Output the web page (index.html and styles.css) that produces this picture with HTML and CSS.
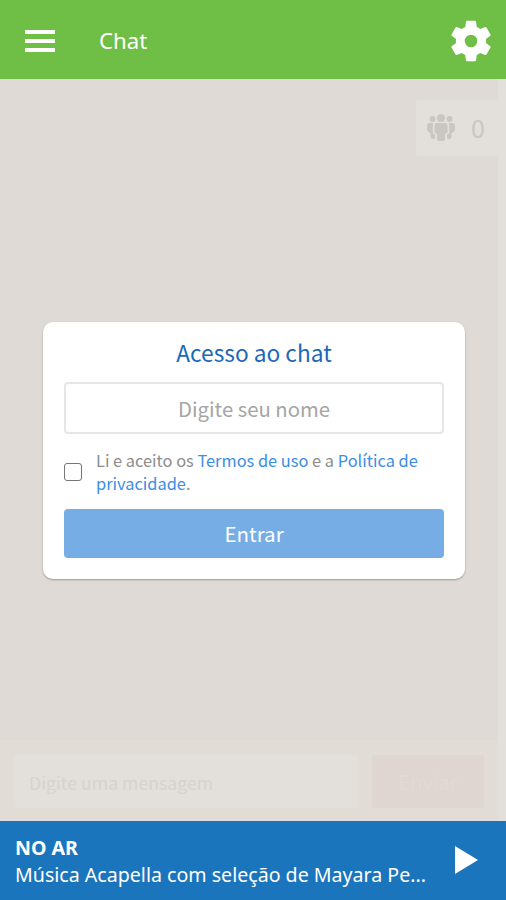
FILE: index.html
```html
<!DOCTYPE html>
<html lang="pt-BR">
<head>
  <meta charset="UTF-8">
  <meta name="viewport" content="width=device-width, initial-scale=1.0">
  <title>Chat</title>
  <link rel="stylesheet" href="styles.css">
</head>
<body>
  <!-- Top bar -->
  <header class="topbar">
    <button class="menu-btn" aria-label="Menu">
      <span></span>
      <span></span>
      <span></span>
    </button>
    <h1>Chat</h1>
    <button class="settings-btn" aria-label="Ajustes">
      <svg viewBox="2 2 20 20" width="42" height="42">
        <path fill="#fff" d="M19.14 12.94c.04-.3.06-.61.06-.94s-.02-.64-.07-.94l2.03-1.58a.49.49 0 0 0 .12-.61l-1.92-3.32a.49.49 0 0 0-.59-.22l-2.39.96a7 7 0 0 0-1.62-.94l-.36-2.54a.48.48 0 0 0-.48-.41h-3.84a.48.48 0 0 0-.47.41l-.36 2.54c-.59.24-1.13.57-1.62.94l-2.39-.96a.48.48 0 0 0-.59.22L2.74 8.87a.48.48 0 0 0 .12.61l2.03 1.58c-.05.3-.09.63-.09.94s.02.64.07.94l-2.03 1.58a.49.49 0 0 0-.12.61l1.92 3.32c.12.22.37.29.59.22l2.39-.96c.5.38 1.03.7 1.62.94l.36 2.54c.05.24.24.41.48.41h3.84c.24 0 .44-.17.47-.41l.36-2.54a7 7 0 0 0 1.62-.94l2.39.96c.22.08.47 0 .59-.22l1.92-3.32a.48.48 0 0 0-.12-.61zM12 15a3 3 0 1 1 0-6 3 3 0 0 1 0 6z"/>
      </svg>
    </button>
  </header>

  <!-- Chat room -->
  <main class="room">
    <div class="users">
      <svg viewBox="0 0 30 28" width="30" height="28" fill="#cac6c1">
        <circle cx="15" cy="4" r="4"/>
        <circle cx="6.5" cy="5" r="3"/>
        <circle cx="23.5" cy="5" r="3"/>
        <path d="M11 9h8q2.500 0 2.500 2.500V18q0 1.500-1.500 1.500h-1V25q0 2-2 2h-4q-2 0-2-2v-5.500h-1Q8.500 19.500 8.500 18v-6.500Q8.500 9 11 9z"/>
        <path d="M4 9h3.500q-.7 1-.7 2.500V18q0 2 2.200 2.700V24q-.5 1-2 1-2.500 0-2.500-2v-4Q1 18 1 15v-3q0-3 3-3z"/>
        <path d="M26 9h-3.500q.7 1 .7 2.500V18q0 2-2.200 2.700V24q.5 1 2 1 2.500 0 2.500-2v-4q3.500-1 3.500-4v-3q0-3-3-3z"/>
      </svg>
      <span>0</span>
    </div>

    <form class="login">
      <h2>Acesso ao chat</h2>
      <input type="text" class="name" placeholder="Digite seu nome">
      <div class="terms">
        <input type="checkbox" id="accept">
        <label for="accept">Li e aceito os <a href="#">Termos de uso</a> e a <a href="#">Política de privacidade</a>.</label>
      </div>
      <button type="button" class="enter">Entrar</button>
    </form>

    <div class="composer">
      <input type="text" placeholder="Digite uma mensagem">
      <button type="button">Enviar</button>
    </div>
  </main>

  <!-- Player -->
  <footer class="player">
    <div class="on-air">
      <strong>NO AR</strong>
      <p>Música Acapella com seleção de Mayara Pe...</p>
    </div>
    <svg class="play" viewBox="0 0 23 28" width="23" height="28">
      <path fill="#fff" d="M0 0l23 14L0 28z"/>
    </svg>
  </footer>
</body>
</html>
```
FILE: styles.css
```css
* {
  box-sizing: border-box;
}
body {
  margin: 0;
  height: 900px;
  display: flex;
  flex-direction: column;
  overflow: hidden;
  font-family: "Noto Sans", sans-serif;
}
h1, h2, p {
  margin: 0;
  font-weight: normal;
}
button {
  border: none;
  padding: 0;
}

/* Top bar */
.topbar {
  height: 79px;
  padding: 3px 14px 0 25px;
  display: flex;
  align-items: center;
  background: #6fbf47;
  color: #fff;
}
.topbar h1 {
  margin-left: 44px;
  padding-bottom: 2px;
  font-size: 22.2px;
}
.menu-btn {
  width: 30px;
  display: flex;
  flex-direction: column;
  gap: 5px;
  background: none;
}
.menu-btn span {
  height: 4px;
  background: #fff;
}
.settings-btn {
  margin-left: auto;
  height: 42px;
  background: none;
}

/* Chat room */
.room {
  flex: 1;
  display: flex;
  flex-direction: column;
  background: #dfdad5;
  border-right: 8px solid #e3dfdb;
  font-family: "Noto Sans CJK SC", sans-serif;
}
.users {
  align-self: flex-end;
  width: 82px;
  height: 56px;
  margin-top: 21px;
  padding: 0 13px 0 10px;
  display: flex;
  align-items: center;
  justify-content: space-between;
  border-radius: 3px 0 0 3px;
  background: #e3dfdb;
  color: #cac6c1;
  font-size: 25px;
}
.users span {
  padding-bottom: 2px;
}

/* Login card */
.login {
  width: 422px;
  height: 257px;
  margin: 166px 0 0 43px;
  padding: 13px 21px 22px;
  border-radius: 10px;
  background: #fff;
  box-shadow: 0 1px 2px rgba(0, 0, 0, .3);
}
.login h2 {
  height: 35px;
  line-height: 35px;
  text-align: center;
  font-size: 22.7px;
  color: #1b69b6;
}
.name {
  display: block;
  width: 100%;
  height: 52px;
  margin-top: 12px;
  border: 2px solid #e6e6e6;
  border-radius: 4px;
  text-align: center;
  font: 20.3px "Noto Sans CJK SC", sans-serif;
}
.name::placeholder {
  color: #a5a5a5;
}
.terms {
  height: 75px;
  display: flex;
  align-items: center;
  color: #8c8c8c;
  font-size: 16.4px;
  line-height: 23px;
}
.terms input {
  flex: none;
  appearance: none;
  width: 18px;
  height: 18px;
  margin: 0 14px 0 0;
  border: 1.500px solid #767676;
  border-radius: 3px;
}
.terms a {
  color: #3c8de6;
  text-decoration: none;
}
.enter {
  width: 100%;
  height: 49px;
  padding-bottom: 1px;
  border-radius: 4px;
  background: #75ade4;
  color: #fff;
  font: 20.5px "Noto Sans CJK SC", sans-serif;
}

/* Message box */
.composer {
  height: 81px;
  margin-top: auto;
  padding: 15px 14px 13px 13px;
  display: flex;
  gap: 14px;
  background: #e1dcd6;
}
.composer input {
  flex: 1;
  min-width: 0;
  padding: 0 16px;
  border: none;
  border-radius: 3px;
  background: #e3dfdb;
  font: 17.7px "Noto Sans CJK SC", sans-serif;
}
.composer input::placeholder {
  color: #d7d3ce;
}
.composer button {
  width: 112px;
  border-radius: 3px;
  background: #dfd6d2;
  color: #e1dad5;
  font: 20px "Noto Sans CJK SC", sans-serif;
}

/* Player */
.player {
  height: 79px;
  padding: 0 28px 0 15px;
  display: flex;
  align-items: center;
  background: #1b75bc;
  color: #fff;
}
.on-air {
  font-size: 19.6px;
  line-height: 27px;
  white-space: nowrap;
}
.on-air strong {
  display: block;
}
.play {
  margin-left: auto;
  margin-bottom: 2px;
}
```
